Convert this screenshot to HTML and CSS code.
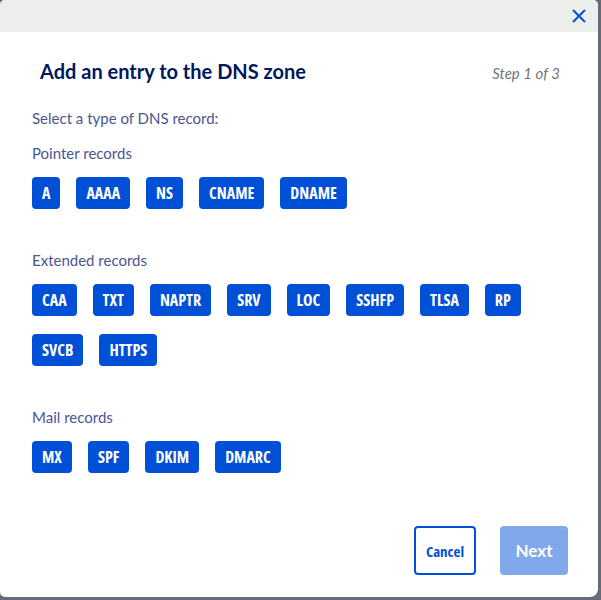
FILE: index.html
```html
<!DOCTYPE html>
<html lang="en">
<head>
  <meta charset="UTF-8" />
  <meta name="viewport" content="width=device-width, initial-scale=1.0"/>
  <title>Add an entry to the DNS zone</title>
  <link rel="stylesheet" href="styles.css">
</head>
<body>

  <div class="modal">
    <div class="modal-top">
      <button class="close-btn" aria-label="Close">
        <svg width="14" height="14" viewBox="0 0 14 14">
          <path d="M1 1 L13 13 M13 1 L1 13" stroke="#0050d7" stroke-width="2" fill="none"/>
        </svg>
      </button>
    </div>

    <div class="modal-body">
      <div class="title-row">
        <h2>Add an entry to the DNS zone</h2>
        <span class="step">Step 1 of 3</span>
      </div>

      <p class="intro">Select a type of DNS record:</p>

      <div class="group">
        <div class="group-label">Pointer records</div>
        <div class="chips">
          <button class="chip">A</button>
          <button class="chip">AAAA</button>
          <button class="chip">NS</button>
          <button class="chip">CNAME</button>
          <button class="chip">DNAME</button>
        </div>
      </div>

      <div class="group">
        <div class="group-label">Extended records</div>
        <div class="chips">
          <button class="chip">CAA</button>
          <button class="chip">TXT</button>
          <button class="chip">NAPTR</button>
          <button class="chip">SRV</button>
          <button class="chip">LOC</button>
          <button class="chip">SSHFP</button>
          <button class="chip">TLSA</button>
          <button class="chip">RP</button>
          <button class="chip">SVCB</button>
          <button class="chip">HTTPS</button>
        </div>
      </div>

      <div class="group">
        <div class="group-label">Mail records</div>
        <div class="chips">
          <button class="chip">MX</button>
          <button class="chip">SPF</button>
          <button class="chip">DKIM</button>
          <button class="chip">DMARC</button>
        </div>
      </div>
    </div>

    <div class="modal-footer">
      <button class="cancel-btn">Cancel</button>
      <button class="next-btn" disabled>Next</button>
    </div>
  </div>

</body>
</html>
```

FILE: styles.css
```css
body {
  margin: 0;
  background: #676a79;
  font-family: Lato, "Noto Sans", sans-serif;
}

.modal {
  width: 598px;
  height: 597px;
  background: white;
  border-radius: 5px 5px 8px 5px;
  overflow: hidden;
  display: flex;
  flex-direction: column;
}

.modal-top {
  height: 32px;
  background: #eceeec;
  display: flex;
  justify-content: flex-end;
  align-items: center;
  padding-right: 12px;
}

.close-btn {
  background: none;
  border: none;
  padding: 0;
  width: 14px;
  height: 14px;
  cursor: pointer;
}

.modal-body {
  flex: 1;
  padding: 0 38px 0 32px;
}

.title-row {
  display: flex;
  justify-content: space-between;
  align-items: baseline;
  margin-top: 27px;
  padding-left: 8px;
}

.title-row h2 {
  margin: 0;
  font-size: 20px;
  line-height: 24px;
  font-weight: bold;
  color: #00185e;
}

.step {
  font-size: 15px;
  font-style: italic;
  color: #757575;
}

.intro {
  margin: 25px 0 15px;
  font-size: 15px;
  line-height: 20px;
  color: #4d5592;
}

.group {
  margin-bottom: 41px;
}

.group-label {
  font-size: 15px;
  line-height: 20px;
  color: #4d5592;
  margin-bottom: 14px;
}

.chips {
  display: flex;
  flex-wrap: wrap;
  gap: 18px 16px;
}

.chip {
  height: 32px;
  padding: 0 10px;
  border: none;
  border-radius: 4px;
  background: #0050d7;
  color: white;
  font-family: "Open Sans", sans-serif;
  font-stretch: 75%;
  font-size: 16px;
  font-weight: bold;
  cursor: pointer;
}

.modal-footer {
  display: flex;
  justify-content: flex-end;
  gap: 24px;
  padding: 0 30px 22px 0;
}

.cancel-btn {
  width: 62px;
  height: 49px;
  border: 2px solid #0050d7;
  border-radius: 4px;
  background: white;
  color: #0050d7;
  font-family: "Open Sans", sans-serif;
  font-stretch: 75%;
  font-size: 15px;
  font-weight: bold;
  cursor: pointer;
}

.next-btn {
  width: 68px;
  height: 49px;
  border: none;
  border-radius: 4px;
  background: #80a8ea;
  color: white;
  font-family: Lato, "Noto Sans", sans-serif;
  font-size: 17px;
  font-weight: bold;
}
```
